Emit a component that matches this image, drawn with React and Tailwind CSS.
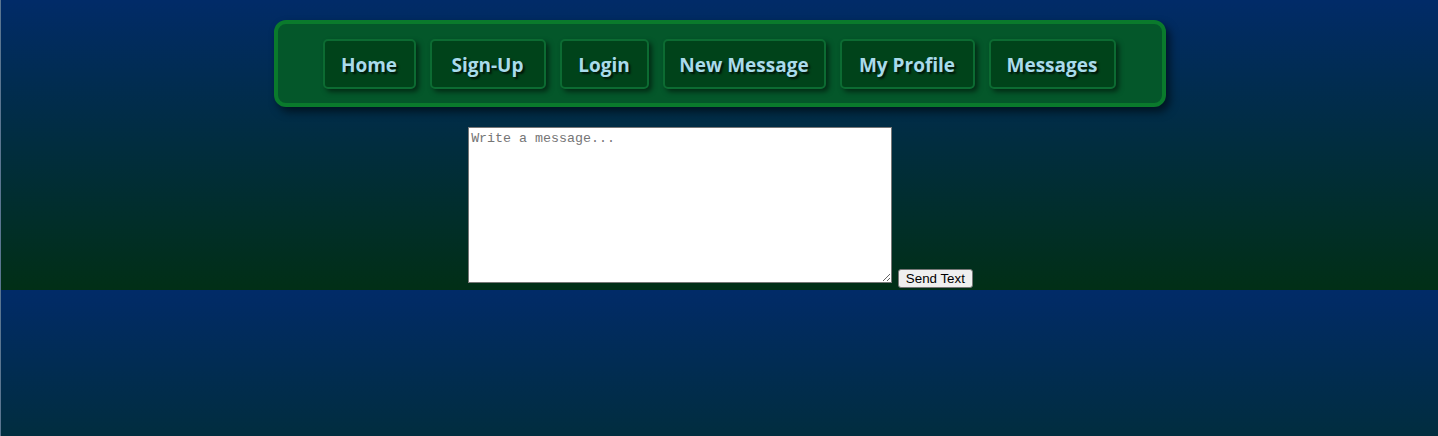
export default function App() {
  const items = [
    { label: "Home", w: "w-[93px]" },
    { label: "Sign-Up", w: "w-[116px]" },
    { label: "Login", w: "w-[89px]" },
    { label: "New Message", w: "w-[163px]" },
    { label: "My Profile", w: "w-[135px]" },
    { label: "Messages", w: "w-[127px]" },
  ];
  return (
    <div className="min-h-[436px] border-l border-[#5a7590] bg-[linear-gradient(to_bottom,#012b68,#012f16)] bg-[length:100%_290px] bg-repeat-y">
      <div className="flex justify-center pt-[20px]">
        <nav className="w-[892px] h-[87px] rounded-[12px] border-4 border-[#0a7a2c] bg-[#04572a] shadow-[4px_5px_8px_rgba(0,0,0,0.55)] flex items-center justify-center gap-[14px] pr-[1px]">
          {items.map((it) => (
            <a
              key={it.label}
              className={`${it.w} h-[50px] pt-[3px] flex items-center justify-center rounded-[5px] border-2 border-[#0c6b32] bg-[#00431a] shadow-[3px_3px_5px_rgba(0,0,0,0.5)] text-[#a9dbeb] text-[19px] font-bold [text-shadow:2px_2px_2px_rgba(0,0,0,0.7)] [font-family:'Comic_Sans_MS','Open_Sans',sans-serif] cursor-pointer`}
            >
              {it.label}
            </a>
          ))}
        </nav>
      </div>
      <div className="text-center mt-[20px] pl-[2px] text-[13.33px] leading-[normal] [font-family:'Liberation_Sans',Arial,sans-serif]">
        <textarea
          placeholder="Write a message..."
          className="w-[424px] h-[156px] align-baseline bg-white border border-[#767676] px-[2px] pt-[3px] pb-[1px] text-[13.33px] text-black [font-family:'Liberation_Mono','DejaVu_Sans_Mono',monospace] placeholder:text-[#757575] resize"
        />{" "}
        <button className="ml-[2px] align-baseline bg-[#efefef] border border-[#767676] rounded-[3px] px-[7px] py-[1px] text-[13.33px] text-black">
          Send Text
        </button>
      </div>
    </div>
  );
}
